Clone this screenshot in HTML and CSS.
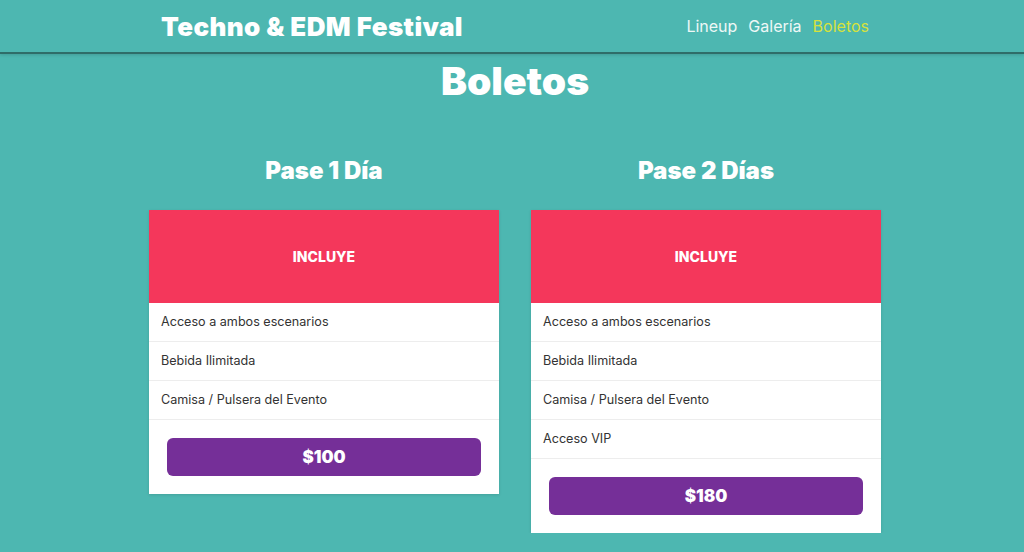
FILE: index.html
```html
<!DOCTYPE html>
<html lang="es">
<head>
    <meta charset="UTF-8">
    <meta name="viewport" content="width=device-width, initial-scale=1.0">
    <title>Techno &amp; EDM Festival</title>
    <link rel="stylesheet" href="styles.css">
</head>
<body>
    <header class="site-header">
        <div class="container header-inner">
            <div class="logo">Techno &amp; EDM Festival</div>
            <nav class="nav">
                <a href="#">Lineup</a>
                <a href="#">Galería</a>
                <a href="#" class="active">Boletos</a>
            </nav>
        </div>
    </header>

    <main class="container">
        <h1 class="page-title">Boletos</h1>
        <div class="passes">
            <div class="pass">
                <h2>Pase 1 Día</h2>
                <div class="card">
                    <div class="card-head">INCLUYE</div>
                    <ul class="features">
                        <li>Acceso a ambos escenarios</li>
                        <li>Bebida Ilimitada</li>
                        <li>Camisa / Pulsera del Evento</li>
                    </ul>
                    <div class="card-foot">
                        <a href="#" class="buy">$100</a>
                    </div>
                </div>
            </div>
            <div class="pass">
                <h2>Pase 2 Días</h2>
                <div class="card">
                    <div class="card-head">INCLUYE</div>
                    <ul class="features">
                        <li>Acceso a ambos escenarios</li>
                        <li>Bebida Ilimitada</li>
                        <li>Camisa / Pulsera del Evento</li>
                        <li>Acceso VIP</li>
                    </ul>
                    <div class="card-foot">
                        <a href="#" class="buy">$180</a>
                    </div>
                </div>
            </div>
        </div>
    </main>
</body>
</html>
```

FILE: styles.css
```css
body {
    margin: 0;
    font-family: Inter, "Open Sans", sans-serif;
    background-color: #4db7b1;
    color: #333;
}
.container {
    width: 732px;
    margin: 0 auto;
    padding-left: 6px;
}
.site-header {
    height: 52px;
    border-bottom: 2px solid #2f6d69;
    box-shadow: 0 1px 3px rgba(0,0,0,0.15);
}
.header-inner {
    box-sizing: border-box;
    width: 738px;
    padding: 0 12px 0 18px;
    height: 52px;
    display: flex;
    align-items: center;
    justify-content: space-between;
}
.logo {
    color: white;
    font-size: 26px;
    font-weight: 900;
    letter-spacing: 0.4px;
}
.nav {
    display: flex;
    gap: 11px;
}
.nav a {
    color: #eef7f6;
    text-decoration: none;
    font-size: 16px;
}
.nav a.active {
    color: #d6e23c;
}
.page-title {
    margin: 5px 0 0;
    text-align: center;
    color: white;
    font-size: 39px;
    font-weight: 900;
    line-height: 44px;
}
.passes {
    display: flex;
    gap: 32px;
    align-items: flex-start;
    margin-top: 54px;
}
.pass {
    width: 350px;
}
.pass h2 {
    margin: 0 0 25px;
    text-align: center;
    color: white;
    font-size: 24px;
    font-weight: 900;
    line-height: 28px;
}
.card {
    background-color: white;
    box-shadow: 0 1px 3px rgba(0,0,0,0.12);
}
.card-head {
    background-color: #f4375b;
    color: white;
    height: 93px;
    display: flex;
    align-items: center;
    justify-content: center;
    font-size: 14px;
    font-weight: 800;
}
.features {
    list-style: none;
    margin: 0;
    padding: 0;
}
.features li {
    height: 38px;
    line-height: 38px;
    padding-left: 12px;
    font-size: 12.6px;
    color: #333;
    border-bottom: 1px solid #ededed;
}
.card-foot {
    padding: 18px 18px 18px;
}
.buy {
    display: block;
    height: 38px;
    line-height: 38px;
    border-radius: 6px;
    background-color: #752f98;
    color: white;
    text-align: center;
    text-decoration: none;
    font-size: 17px;
    font-weight: 900;
}
```
